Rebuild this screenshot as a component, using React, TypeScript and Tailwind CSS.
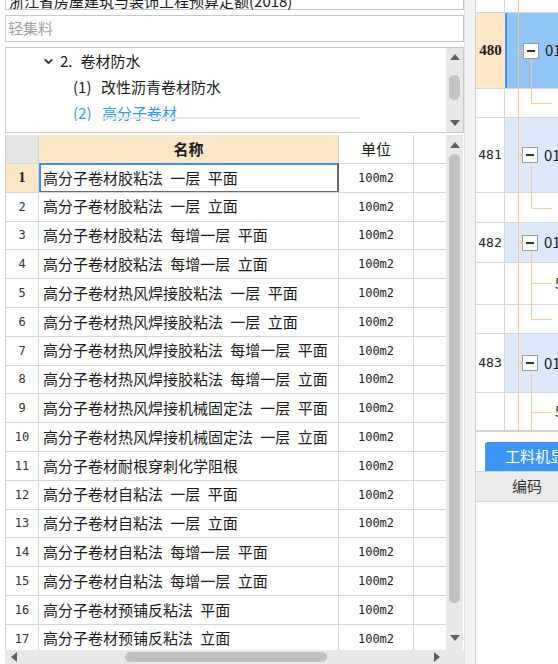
import React from 'react';
import { ChevronDown } from 'lucide-react';

const names = [
  '高分子卷材胶粘法 一层 平面',
  '高分子卷材胶粘法 一层 立面',
  '高分子卷材胶粘法 每增一层 平面',
  '高分子卷材胶粘法 每增一层 立面',
  '高分子卷材热风焊接胶粘法 一层 平面',
  '高分子卷材热风焊接胶粘法 一层 立面',
  '高分子卷材热风焊接胶粘法 每增一层 平面',
  '高分子卷材热风焊接胶粘法 每增一层 立面',
  '高分子卷材热风焊接机械固定法 一层 平面',
  '高分子卷材热风焊接机械固定法 一层 立面',
  '高分子卷材耐根穿刺化学阻根',
  '高分子卷材自粘法 一层 平面',
  '高分子卷材自粘法 一层 立面',
  '高分子卷材自粘法 每增一层 平面',
  '高分子卷材自粘法 每增一层 立面',
  '高分子卷材预铺反粘法 平面',
  '高分子卷材预铺反粘法 立面',
];

type RRow = { h: string; num?: string; sel?: boolean; parent?: boolean; tail?: boolean };

// rows of the right hand grid, heights taken from the screen
const rightRows: RRow[] = [
  { h: 'h-[13px]' },
  { h: 'h-[76px]', num: '480', sel: true, parent: true },
  { h: 'h-[29px]' },
  { h: 'h-[75px]', num: '481', parent: true },
  { h: 'h-[30px]' },
  { h: 'h-[40px]', num: '482', parent: true },
  { h: 'h-[42px]', tail: true },
  { h: 'h-[29px]' },
  { h: 'h-[59px]', num: '483', parent: true },
  { h: 'h-[38px]', tail: true },
];

const Arrow = ({ dir }: { dir: 'up' | 'down' | 'left' | 'right' }) => {
  const pts = {
    up: '5,0 10,6 0,6',
    down: '0,0 10,0 5,6',
    left: '6,0 6,10 0,5',
    right: '0,0 6,5 0,10',
  }[dir];
  const vertical = dir === 'up' || dir === 'down';
  return (
    <svg width={vertical ? 10 : 6} height={vertical ? 6 : 10} viewBox={vertical ? '0 0 10 6' : '0 0 6 10'}>
      <polygon points={pts} fill="#606060" />
    </svg>
  );
};

const MinusBox = () => (
  <div className="w-[16px] h-[16px] shrink-0 border border-[#9c9c9c] bg-white flex items-center justify-center">
    <div className="w-[8px] h-[2px] bg-[#333]" />
  </div>
);

const TreeLines = () => (
  <svg className="absolute left-0 top-0 pointer-events-none" width="83" height="431" viewBox="0 0 83 431">
    <g stroke="#f8c98c" strokeWidth="1" fill="none">
      <path d="M42.5 0 V431" />
      <path d="M42.5 50.5 H47 M42.5 155.5 H47 M42.5 242.5 H47 M42.5 363.5 H47" />
      <path d="M55.5 59 V103.5 H76" />
      <path d="M55.5 164 V208.5 H76" />
      <path d="M55.5 251 V319.5 H76 M55.5 283.5 H76" />
      <path d="M55.5 372 V431 M55.5 412.5 H76" />
    </g>
  </svg>
);

export default function App() {
  return (
    <div className="w-[558px] h-[664px] overflow-hidden flex bg-white text-[#1a1a1a] font-['Noto_Sans_CJK_SC',sans-serif]">
      {/* left side */}
      <div className="w-[464px] shrink-0 flex flex-col pl-[5px]">
        <div className="h-[20px] -mt-[10px] border border-[#c8c8c8] flex items-center pl-[3px] pr-[6px] text-[15px] leading-none">
          <span className="flex-1 whitespace-nowrap">浙江省房屋建筑与装饰工程预算定额(2018)</span>
        </div>
        <div className="h-[27px] mt-[5px] border border-[#c8c8c8] flex items-center pl-[2px] text-[15px] text-[#a0a0a0]">
          轻集料
        </div>

        {/* tree */}
        <div className="h-[86px] mt-[5px] border border-[#c8c8c8] flex relative">
          <div className="flex-1 h-[73px] overflow-hidden text-[15px]">
            <div className="h-[26px] flex items-center pl-[36px]">
              <ChevronDown size={13} strokeWidth={3.5} color="#333" />
              <span className="ml-[5px]">2.</span>
              <span className="ml-[8px]">卷材防水</span>
            </div>
            <div className="h-[26px] flex items-center pl-[67px]">
              <span className="w-[28px]">(1)</span>
              <span>改性沥青卷材防水</span>
            </div>
            <div className="h-[26px] flex items-center pl-[67px] text-[#2f98ff]">
              <span className="w-[29px]">(2)</span>
              <span>高分子卷材</span>
            </div>
          </div>
          <div className="absolute left-[95px] top-[69px] w-[259px] h-[2px] bg-[#e4e4e4]" />
          <div className="w-[17px] bg-[#e8e8e8] flex flex-col items-center pt-[6px] pb-[6px]">
            <Arrow dir="up" />
            <div className="mt-[15px] w-[11px] h-[25px] rounded-full bg-[#c4c4c4]" />
            <div className="flex-1" />
            <Arrow dir="down" />
          </div>
        </div>

        {/* table */}
        <div className="mt-[2px] flex-1 min-h-0 flex flex-col">
          <div className="flex-1 min-h-0 flex">
            <div className="w-[441px] overflow-hidden border-l border-[#d4d4d4]">
              <div className="grid grid-cols-[33px_300px_75px_33px] h-[29px] border-b border-[#d4d4d4] text-[15px]">
                <div className="bg-[#e4e4e4] border-r border-[#d4d4d4]" />
                <div className="bg-[#fde6c6] border-r border-[#d4d4d4] flex items-center justify-center font-bold">名称</div>
                <div className="border-r border-[#d4d4d4] flex items-center justify-center">单位</div>
                <div className="border-r border-[#d4d4d4]" />
              </div>
              {names.map((n, i) => (
                <div key={i} className="grid grid-cols-[33px_300px_75px_33px] h-[28.8px] border-b border-[#d4d4d4]">
                  {i === 0 ? (
                    <div className="bg-[#fde6c6] border-r border-[#d4d4d4] flex items-center justify-center font-['Liberation_Serif',serif] font-bold text-[14px]">1</div>
                  ) : (
                    <div className="border-r border-[#d4d4d4] flex items-center justify-center font-['DejaVu_Sans_Mono',monospace] text-[12px] text-[#333]">{i + 1}</div>
                  )}
                  <div
                    className={
                      i === 0
                        ? 'border-t-2 border-l-2 border-r-2 border-b border-t-[#3b8ff5] border-l-[#3b8ff5] border-r-[#6a6a6a] border-b-[#6a6a6a] -mt-px flex items-center pl-[2px] text-[15px] whitespace-nowrap [word-spacing:4px]'
                        : 'border-r border-[#d4d4d4] flex items-center pl-[4px] text-[15px] whitespace-nowrap [word-spacing:4px]'
                    }
                  >
                    {n}
                  </div>
                  <div className="border-r border-[#d4d4d4] flex items-center justify-center font-['DejaVu_Sans_Mono',monospace] text-[12px] text-[#222]">100m2</div>
                  <div className="border-r border-[#d4d4d4]" />
                </div>
              ))}
            </div>
            <div className="w-[17px] bg-[#e8e8e8] flex flex-col items-center pt-[7px] pb-[9px]">
              <Arrow dir="up" />
              <div className="mt-[6px] w-[11px] h-[449px] rounded-full bg-[#c1c1c1]" />
              <div className="flex-1" />
              <Arrow dir="down" />
            </div>
          </div>
          <div className="h-[14px] flex bg-[#e8e8e8]">
            <div className="w-[441px] flex items-center pl-[6px] pr-[6px]">
              <Arrow dir="left" />
              <div className="ml-[108px] w-[202px] h-[10px] rounded-full bg-[#c1c1c1]" />
              <div className="flex-1" />
              <Arrow dir="right" />
            </div>
            <div className="w-[17px]" />
          </div>
        </div>
      </div>

      {/* splitter */}
      <div className="w-[11px] shrink-0 bg-[#f3f3f3] border-l border-[#e2e2e2]" />

      {/* right side */}
      <div className="flex-1 flex flex-col border-l border-[#d2d2d2] min-w-0">
        <div className="relative h-[431px] shrink-0">
          {rightRows.map((r, i) => (
            <div key={i} className={`${r.h} flex border-b border-[#d6d6d6]`}>
              <div
                className={
                  r.sel
                    ? 'w-[29px] shrink-0 bg-[#fde6c6] flex items-center justify-center font-["Liberation_Serif",serif] font-bold text-[15px]'
                    : 'w-[29px] shrink-0 border-r border-[#d6d6d6] flex items-center justify-center font-["DejaVu_Sans_Mono",monospace] text-[13px] text-[#222]'
                }
              >
                {r.num}
              </div>
              {r.parent ? (
                <div
                  className={
                    r.sel
                      ? 'flex-1 bg-[#90c6f5] border-l-2 border-[#3b8ff5] flex items-center pl-[16px] text-[15px] whitespace-nowrap overflow-hidden'
                      : 'flex-1 bg-[#dce9fc] flex items-center pl-[17px] text-[15px] whitespace-nowrap overflow-hidden'
                  }
                >
                  <MinusBox />
                  <span className="ml-[6px]">01</span>
                </div>
              ) : (
                <div className="flex-1 flex items-center pl-[50px] text-[15px] whitespace-nowrap overflow-hidden">
                  {r.tail ? '5' : ''}
                </div>
              )}
            </div>
          ))}
          <TreeLines />
        </div>
        <div className="border-t border-[#cfcfcf] pt-[10px]">
          <div className="ml-[9px] h-[29px] w-[90px] bg-[#3d95f7] rounded-t-[3px] flex items-center pl-[20px] text-white text-[15px] whitespace-nowrap overflow-hidden">
            工料机显示
          </div>
          <div className="h-[31px] bg-[#ebebeb] border-y border-[#d2d2d2] flex">
            <div className="w-[102px] shrink-0 flex items-center justify-center text-[15px] text-[#333]">编码</div>
          </div>
        </div>
      </div>
    </div>
  );
}
